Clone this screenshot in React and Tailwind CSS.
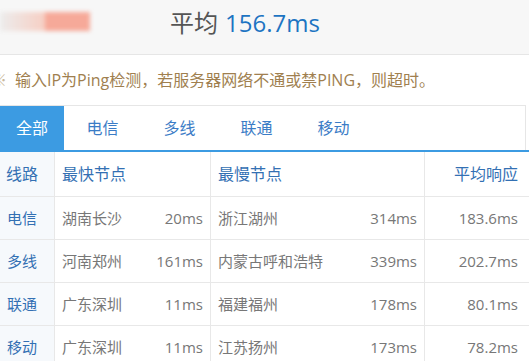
import React from "react";

const rows = [
  ["电信", "湖南长沙", "20ms", "浙江湖州", "314ms", "183.6ms"],
  ["多线", "河南郑州", "161ms", "内蒙古呼和浩特", "339ms", "202.7ms"],
  ["联通", "广东深圳", "11ms", "福建福州", "178ms", "80.1ms"],
  ["移动", "广东深圳", "11ms", "江苏扬州", "173ms", "78.2ms"],
];

const tabs = ["电信", "多线", "联通", "移动"];

export default function App() {
  return (
    <div
      className="w-[529px] h-[361px] overflow-hidden bg-white"
      style={{ fontFamily: '"Open Sans", "Noto Sans CJK SC", sans-serif' }}
    >
      {/* header */}
      <div className="h-[55px] bg-[#f7f7f7] border-b border-[#e6e6e6] flex items-start">
        <div className="mt-[12px] w-[90px] h-[19px] flex blur-[2px]">
          <div className="w-[45px] h-full bg-gradient-to-r from-[#ececec] to-[#f6cfc4]" />
          <div className="w-[45px] h-full bg-[#f6a999]" />
        </div>
        <div className="ml-[80px] mt-[5px] text-[24px] leading-[36px] flex gap-[7px]">
          <span className="text-[#555]">平均</span>
          <span className="text-[#1d74c2]">156.7ms</span>
        </div>
      </div>

      {/* notice */}
      <div className="h-[50px] flex items-center text-[16px] text-[#a07f4f] whitespace-nowrap">
        <span className="-ml-[9px] mr-[8px] text-[#c9b89b]">※</span>
        <span>输入IP为Ping检测，若服务器网络不通或禁PING，则超时。</span>
      </div>

      {/* tabs */}
      <div className="border-b-2 border-[#3c9be2]">
        <div className="w-[526px] h-[45px] border-t border-r border-[#e6e6e6] flex text-[16px]">
          <div className="w-[64px] h-full bg-[#3c9be2] text-white flex items-center justify-center">
            全部
          </div>
          {tabs.map((t) => (
            <div
              key={t}
              className="w-[77px] h-full text-[#3b7cc6] flex items-center justify-center"
            >
              {t}
            </div>
          ))}
        </div>
      </div>

      {/* table */}
      <div className="grid grid-cols-[55px_156px_214px_1fr]">
        <div className="h-[45px] border-b border-r border-[#e8e8e8] bg-[#f6f9fc] flex items-center pl-[6px] text-[16px] text-[#3370b3]">
          线路
        </div>
        <div className="h-[45px] border-b border-r border-[#e8e8e8] flex items-center pl-[7px] text-[16px] text-[#3370b3]">
          最快节点
        </div>
        <div className="h-[45px] border-b border-r border-[#e8e8e8] flex items-center pl-[7px] text-[16px] text-[#3370b3]">
          最慢节点
        </div>
        <div className="h-[45px] border-b border-[#e8e8e8] flex items-center justify-end pr-[11px] text-[16px] text-[#3370b3]">
          平均响应
        </div>
        {rows.map((r) => (
          <React.Fragment key={r[0]}>
            <div className="h-[43px] border-b border-r border-[#e8e8e8] bg-[#f6f9fc] flex items-center pl-[7px] text-[15px] text-[#3370b3]">
              {r[0]}
            </div>
            <div className="h-[43px] border-b border-r border-[#e8e8e8] flex items-center justify-between px-[7px] text-[15px] text-[#777]">
              <span>{r[1]}</span>
              <span>{r[2]}</span>
            </div>
            <div className="h-[43px] border-b border-r border-[#e8e8e8] flex items-center justify-between px-[7px] text-[15px] text-[#777]">
              <span>{r[3]}</span>
              <span>{r[4]}</span>
            </div>
            <div className="h-[43px] border-b border-[#e8e8e8] flex items-center justify-end pr-[11px] text-[15px] text-[#777]">
              {r[5]}
            </div>
          </React.Fragment>
        ))}
      </div>
    </div>
  );
}
